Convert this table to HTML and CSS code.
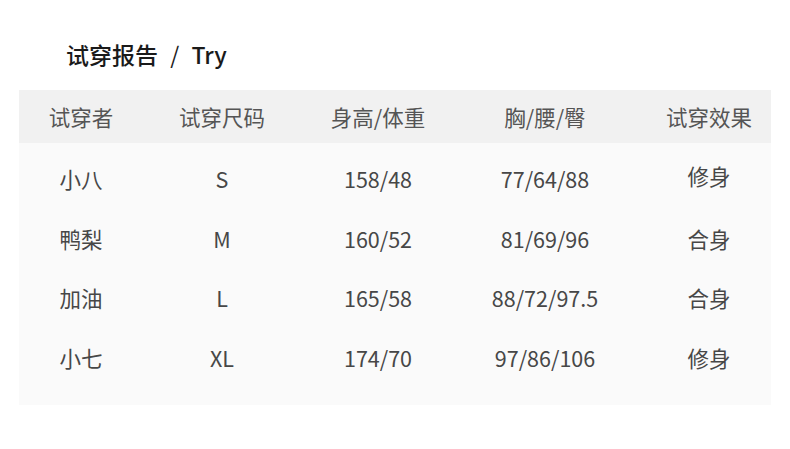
FILE: index.html
```html
<!DOCTYPE html>
<html lang="zh-CN">
<head>
<meta charset="utf-8">
<link rel="stylesheet" href="styles.css">
</head>
<body>
<div class="page">
  <h1 class="title">试穿报告 <span class="slash">/</span> Try</h1>
  <div class="table">
    <div class="row head">
      <div>试穿者</div><div>试穿尺码</div><div>身高/体重</div><div>胸/腰/臀</div><div class="last">试穿效果</div>
    </div>
    <div class="body">
      <div class="row"><div>小八</div><div>S</div><div>158/48</div><div>77/64/88</div><div class="last up">修身</div></div>
      <div class="row"><div>鸭梨</div><div>M</div><div>160/52</div><div>81/69/96</div><div class="last">合身</div></div>
      <div class="row"><div>加油</div><div>L</div><div>165/58</div><div>88/72/97.5</div><div class="last">合身</div></div>
      <div class="row"><div>小七</div><div>XL</div><div>174/70</div><div>97/86/106</div><div class="last">修身</div></div>
    </div>
  </div>
</div>
</body>
</html>
```

FILE: styles.css
```css
* { box-sizing: border-box; }
html, body { margin: 0; padding: 0; background: #fff; }
body { font-family: "Noto Sans CJK SC", "Noto Sans", sans-serif; }
.page { width: 790px; height: 449px; padding: 38px 19px 0 19px; }
.title {
  margin: 0 0 0 47px;
  font-size: 23px;
  font-weight: 500;
  color: #1a1a1a;
  line-height: 32px;
  height: 52px;
}
.slash { margin: 0 7px; font-weight: 400; }
.table { width: 752px; }
.row {
  display: grid;
  grid-template-columns: 124px 158px 154px 180px 136px;
  align-items: center;
  text-align: center;
}
.row .last { padding-left: 12px; }
.head {
  height: 53px;
  background: #f1f1f1;
  color: #555;
  font-size: 21.5px;
}
.body {
  background: #fafafa;
  padding: 6px 0 18px;
}
.body .row {
  height: 59.5px;
  color: #474747;
  font-size: 21.5px;
}
.body .up { position: relative; top: -3px; }
```
